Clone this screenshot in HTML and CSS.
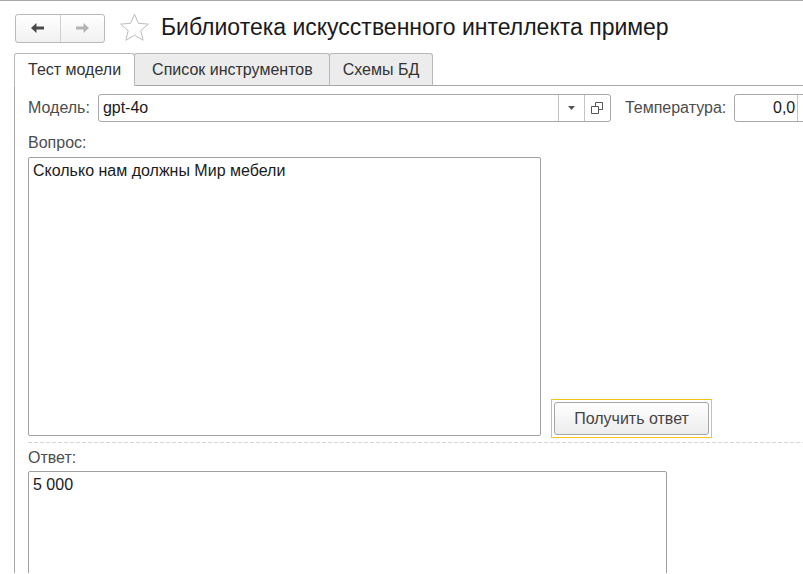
FILE: index.html
```html
<!DOCTYPE html>
<html lang="ru">
<head>
<meta charset="utf-8">
<title>Библиотека искусственного интеллекта пример</title>
<link rel="stylesheet" href="styles.css">
</head>
<body>
<div class="window">
  <header class="header">
    <div class="nav">
      <button class="nav-btn" aria-label="Назад">
        <svg width="13" height="10" viewBox="0 0 13 10"><path d="M0 5 L5.5 0 V3.5 H13 V6.5 H5.5 V10 Z" fill="#4a4a4a"/></svg>
      </button>
      <button class="nav-btn" aria-label="Вперёд">
        <svg width="13" height="10" viewBox="0 0 13 10"><path d="M13 5 L7.5 0 V3.5 H0 V6.5 H7.5 V10 Z" fill="#b4b4b4"/></svg>
      </button>
    </div>
    <svg class="star" width="31" height="29" viewBox="0 0 31 29"><path d="M15.5 1.2 L19.4 10.3 L29.3 11.1 L21.8 17.6 L24.1 27.3 L15.5 22.2 L6.9 27.3 L9.2 17.6 L1.7 11.1 L11.6 10.3 Z" fill="none" stroke="#bdbdbd" stroke-width="1" stroke-linejoin="miter"/></svg>
    <h1 class="title">Библиотека искусственного интеллекта пример</h1>
  </header>

  <nav class="tabs">
    <div class="tab active">Тест модели</div>
    <div class="tab tab-wide">Список инструментов</div>
    <div class="tab">Схемы БД</div>
    <div class="tab-rest"></div>
  </nav>

  <main class="panel">
    <div class="row-model">
      <span class="label">Модель:</span>
      <div class="combo">
        <span class="combo-text">gpt-4o</span>
        <span class="combo-btn">
          <svg width="7" height="4" viewBox="0 0 7 4"><path d="M0 0 H7 L3.5 4 Z" fill="#555"/></svg>
        </span>
        <span class="combo-btn">
          <svg width="12" height="12" viewBox="0 0 12 12"><path d="M4.5 4.5 V0.5 H11.5 V7.5 H7.5" fill="none" stroke="#555"/><path d="M0.5 4.5 H7.5 V11.5 H0.5 Z" fill="none" stroke="#555"/></svg>
        </span>
      </div>
      <span class="label temp-label">Температура:</span>
      <div class="temp">
        <span class="temp-text">0,0</span>
        <span class="temp-btn"></span>
      </div>
    </div>

    <div class="label block-label">Вопрос:</div>
    <div class="row-question">
      <div class="textarea question">Сколько нам должны Мир мебели</div>
      <div class="btn-focus">
        <button class="btn">Получить ответ</button>
      </div>
    </div>

    <div class="separator"></div>

    <div class="label block-label answer-label">Ответ:</div>
    <div class="textarea answer">5 000</div>
  </main>
</div>
</body>
</html>
```

FILE: styles.css
```css
* { box-sizing: border-box; }

html, body {
  margin: 0;
  padding: 0;
  background: #fff;
  overflow: hidden;
}

body {
  font-family: "Liberation Sans", Arial, sans-serif;
  font-size: 16px;
  color: #333;
  width: 803px;
  height: 574px;
}

.window {
  border-top: 1px solid #a8a8a8;
  height: 573px;
  overflow: hidden;
}

.header {
  display: flex;
  align-items: center;
  padding: 12px 0 0 15px;
  height: 42px;
}

.nav {
  display: flex;
  width: 90px;
  height: 29px;
  border: 1px solid #b9b9b9;
  border-radius: 3px;
  background: linear-gradient(#ffffff, #f1f1f1);
}

.nav-btn {
  flex: 1;
  border: 0;
  padding: 0;
  margin: 0;
  background: transparent;
  display: flex;
  align-items: center;
  justify-content: center;
}

.nav-btn + .nav-btn {
  border-left: 1px solid #d0d0d0;
}

.star {
  margin-left: 14px;
  margin-top: -1px;
}

.title {
  margin: 0 0 0 11px;
  font-size: 23px;
  font-weight: normal;
  color: #1a1a1a;
  line-height: 28px;
  position: relative;
  top: -1px;
}

.tabs {
  display: flex;
  margin-top: 10px;
  height: 33px;
  padding-left: 14px;
}

.tab {
  height: 33px;
  padding: 0 13px;
  line-height: 31px;
  font-size: 16px;
  color: #333;
  background: #ececec;
  border: 1px solid #b8b8b8;
  border-bottom-color: #a8a8a8;
  border-radius: 3px 3px 0 0;
  margin-left: -1px;
}

.tab:first-child { margin-left: 0; }

.tab-wide { padding: 0 16px 0 17px; }

.tab.active {
  background: #fff;
  border-bottom-color: #fff;
  position: relative;
  z-index: 1;
}

.tab-rest {
  flex: 1;
  border-bottom: 1px solid #a8a8a8;
}

.panel {
  margin-left: 14px;
  border-left: 1px solid #a8a8a8;
  padding: 8px 0 0 13px;
  height: 500px;
}

.label {
  color: #4d4d4d;
  font-size: 16px;
}

.row-model {
  display: flex;
  align-items: center;
  height: 28px;
  white-space: nowrap;
}

.combo {
  display: flex;
  margin-left: 8px;
  width: 513px;
  flex: none;
  height: 28px;
  border: 1px solid #a8a8a8;
  border-radius: 3px;
}

.combo-text {
  flex: 1;
  padding-left: 4px;
  line-height: 26px;
  color: #1a1a1a;
}

.combo-btn {
  width: 26px;
  border-left: 1px solid #c4c4c4;
  display: flex;
  align-items: center;
  justify-content: center;
}

.temp-label { margin-left: 14px; }

.temp {
  display: flex;
  flex: none;
  margin-left: 8px;
  width: 100px;
  height: 28px;
  border: 1px solid #a8a8a8;
  border-radius: 3px;
}

.temp-text {
  width: 62px;
  text-align: right;
  padding-right: 2px;
  line-height: 26px;
  color: #1a1a1a;
}

.temp-btn {
  flex: 1;
  border-left: 1px solid #c4c4c4;
}

.block-label {
  margin-top: 12px;
  height: 18px;
  line-height: 18px;
}

.row-question {
  display: flex;
  align-items: flex-end;
  margin-top: 5px;
}

.textarea {
  border: 1px solid #a0a0a0;
  border-radius: 2px;
  padding: 4px 4px;
  line-height: 18px;
  color: #1a1a1a;
  font-size: 16px;
}

.question {
  width: 513px;
  height: 279px;
  flex: none;
}

.btn-focus {
  margin-left: 10px;
  margin-bottom: -2px;
  padding: 2px;
  border: 1px solid #f5c518;
}

.btn {
  display: block;
  width: 155px;
  height: 33px;
  margin: 0;
  padding: 0;
  border: 1px solid #a6a6a6;
  border-radius: 3px;
  background: linear-gradient(#ffffff, #ececec);
  font-family: "Liberation Sans", Arial, sans-serif;
  font-size: 16px;
  color: #444;
}

.separator {
  margin-top: 6px;
  height: 1px;
  background: repeating-linear-gradient(to right, #d6d6d6 0 4px, transparent 4px 6px);
}

.answer-label {
  margin-top: 6px;
}

.answer {
  margin-top: 4px;
  width: 639px;
  height: 150px;
}
```
